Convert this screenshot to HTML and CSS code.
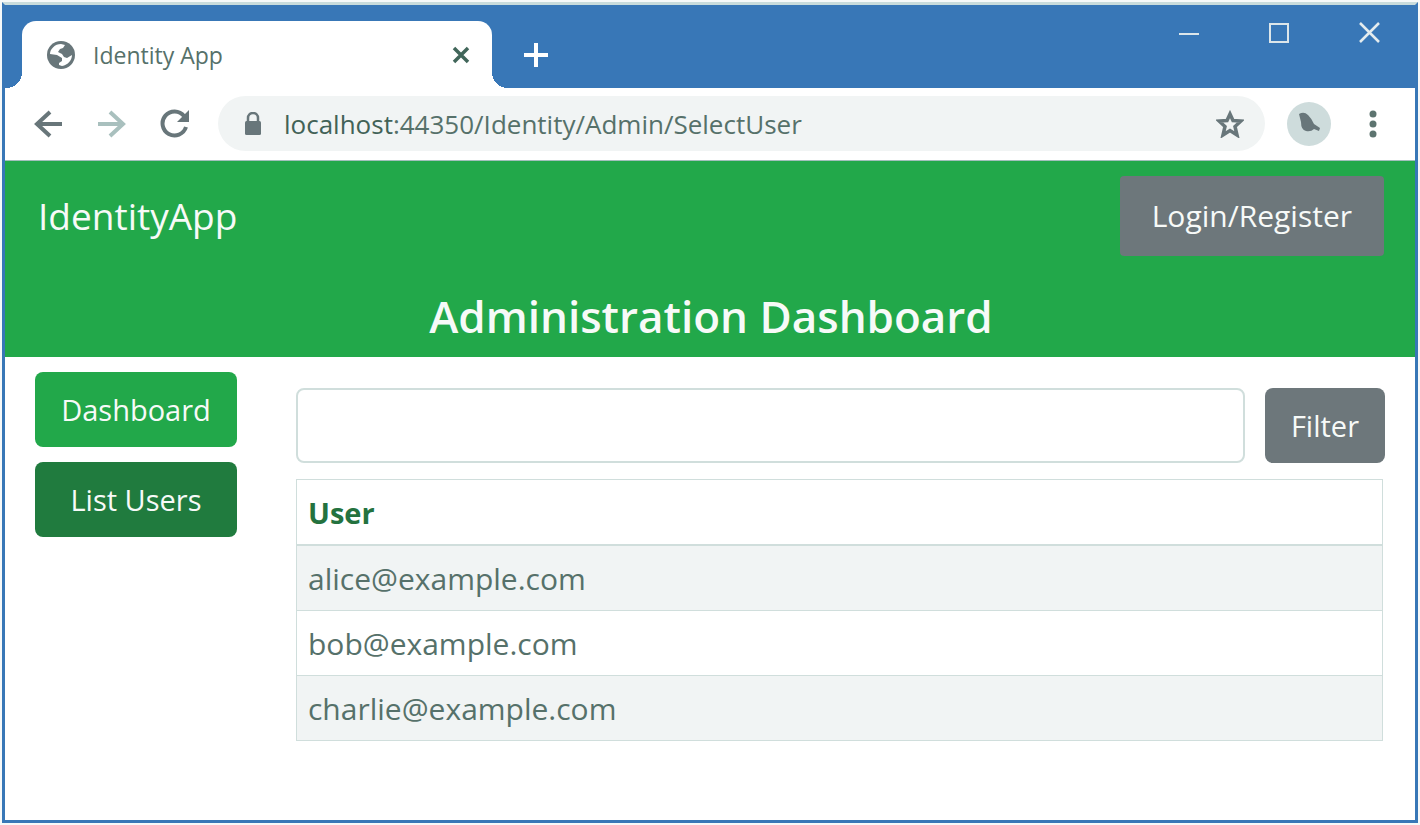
FILE: index.html
```html
<!DOCTYPE html>
<html lang="en">
<head>
<meta charset="utf-8">
<title>Identity App</title>
<link rel="stylesheet" href="styles.css">
</head>
<body>
<div class="window">
  <div class="titlebar">
    <div class="tab">
      <svg class="globe" width="28" height="28" viewBox="0 0 28 28" aria-hidden="true">
        <circle cx="14" cy="14" r="14" fill="#68767a"/>
        <path d="M3 13C3 8 8 3 14 3L18 4 16 7 13 8 11 11 15 13 17 16 20 17 25 14C25 19 21 24 15 25L12 24 12 22 15 20 15 17 10 14Z" fill="#fff"/>
      </svg>
      <span class="tab-title">Identity App</span>
      <button class="icon-button" type="button" aria-label="Close tab">
        <svg width="18" height="18" viewBox="0 0 18 18" fill="none" stroke="#41665a" stroke-width="3.500"><path d="M2 2 16 16M16 2 2 16"/></svg>
      </button>
    </div>
    <button class="icon-button new-tab" type="button" aria-label="New tab">
      <svg width="24" height="24" viewBox="0 0 24 24" fill="none" stroke="#fff" stroke-width="4"><path d="M12 0V24M0 12H24"/></svg>
    </button>
    <div class="window-controls">
      <button class="icon-button" type="button" aria-label="Minimize">
        <svg width="22" height="22" viewBox="0 0 22 22" fill="none" stroke="#dce6ea" stroke-width="2"><path d="M1 13H21"/></svg>
      </button>
      <button class="icon-button" type="button" aria-label="Maximize">
        <svg width="22" height="22" viewBox="0 0 22 22" fill="none" stroke="#dce6ea" stroke-width="2"><path d="M2 3H20V21H2Z"/></svg>
      </button>
      <button class="icon-button" type="button" aria-label="Close">
        <svg width="22" height="22" viewBox="0 0 22 22" fill="none" stroke="#e4ecee" stroke-width="2.500"><path d="M2 2 21 21M21 2 2 21"/></svg>
      </button>
    </div>
  </div>
  <div class="toolbar">
    <div class="history">
      <button class="icon-button" type="button" aria-label="Back">
        <svg width="30" height="28" viewBox="0 0 30 28" fill="none" stroke="#68767a" stroke-width="4"><path d="M28 14H3M16 2 3 14 16 26"/></svg>
      </button>
      <button class="icon-button" type="button" aria-label="Forward">
        <svg width="30" height="28" viewBox="0 0 30 28" fill="none" stroke="#a9c0be" stroke-width="4"><path d="M1 14H26M13 2 26 14 13 26"/></svg>
      </button>
      <button class="icon-button" type="button" aria-label="Reload">
        <svg width="30" height="30" viewBox="0 0 30 30" fill="none" stroke="#68767a" stroke-width="4"><path d="M26 18A12 12 0 1 1 24 7"/><path d="M29 1V13H17Z" fill="#68767a" stroke="none"/></svg>
      </button>
    </div>
    <div class="address">
      <svg width="18" height="24" viewBox="0 0 18 24" aria-hidden="true"><path d="M4 10V6A5 5 0 0 1 14 6V10" fill="none" stroke="#68767a" stroke-width="2.500"/><rect x="1" y="9" width="16" height="14" rx="1.500" fill="#68767a"/></svg>
      <span class="url"><span class="host">localhost</span>:44350/Identity/Admin/SelectUser</span>
      <button class="icon-button" type="button" aria-label="Bookmark">
        <svg width="28" height="28" viewBox="0 0 28 28" fill="none" stroke="#68767a" stroke-width="3.500"><path d="M14 4 17 10.500 25 11 19 16.500 21 25 14 20.500 7 25 9 16.500 3 11 11 10.500Z"/></svg>
      </button>
    </div>
    <button class="icon-button" type="button" aria-label="Profile">
      <svg width="44" height="44" viewBox="0 0 44 44"><circle cx="22" cy="22" r="22" fill="#cedcdc"/><path d="M12 12Q17 9 21 13Q25 17 27 22L33 26L32 29L27 27Q24 30 19 29Q14 28 14 20Z" fill="#68767a"/></svg>
    </button>
    <button class="icon-button" type="button" aria-label="Menu">
      <svg width="8" height="28" viewBox="0 0 8 28" fill="#5d7470"><circle cx="4" cy="4" r="3.500"/><circle cx="4" cy="14" r="3.500"/><circle cx="4" cy="24" r="3.500"/></svg>
    </button>
  </div>
  <header class="header">
    <div class="navbar">
      <a class="brand" href="#">IdentityApp</a>
      <a class="login" href="#">Login/Register</a>
    </div>
    <h1 class="title">Administration Dashboard</h1>
  </header>
  <div class="content">
    <nav class="side">
      <a class="button" href="#">Dashboard</a>
      <a class="button active" href="#">List Users</a>
    </nav>
    <main class="main">
      <form class="filter">
        <input class="filter-input" type="text" aria-label="User filter">
        <button class="button secondary" type="button">Filter</button>
      </form>
      <table class="users">
        <thead><tr><th>User</th></tr></thead>
        <tbody>
          <tr><td>alice@example.com</td></tr>
          <tr><td>bob@example.com</td></tr>
          <tr><td>charlie@example.com</td></tr>
        </tbody>
      </table>
    </main>
  </div>
</div>
</body>
</html>
```
FILE: styles.css
```css
* { box-sizing: border-box; }

body {
  margin: 0;
  padding: 2px;
  background: #f6f9f9;
  font-family: "Open Sans", "Noto Sans", sans-serif;
  font-size: 29px;
  line-height: 44px;
  color: #56716a;
}

.window {
  display: flex;
  flex-direction: column;
  min-height: calc(100vh - 4px);
  border: 3px solid #3877b7;
  border-top-color: #c9dcdc;
  background: #fff;
}

.icon-button {
  display: flex;
  padding: 0;
  border: 0;
  background: none;
}

.titlebar {
  display: flex;
  padding: 16px 35px 0 17px;
  background: #3877b7;
}

.tab {
  position: relative;
  display: flex;
  align-items: center;
  gap: 18px;
  width: 470px;
  height: 67px;
  padding: 0 22px 0 25px;
  border-radius: 14px 14px 0 0;
  background: #fff;
}

.tab::before,
.tab::after {
  content: "";
  position: absolute;
  bottom: 0;
  width: 16px;
  height: 16px;
}

.tab::before {
  right: 100%;
  background: radial-gradient(circle at 0 0, transparent 16px, #fff 16px);
}

.tab::after {
  left: 100%;
  background: radial-gradient(circle at 100% 0, transparent 16px, #fff 16px);
}

.tab-title {
  flex: 1;
  font-size: 23px;
}

.new-tab {
  margin: 22px auto 0 32px;
  align-self: flex-start;
}

.window-controls {
  display: flex;
  gap: 68px;
}

.window-controls .icon-button {
  align-self: flex-start;
}

.toolbar {
  display: flex;
  align-items: center;
  gap: 22px;
  padding: 8px 38px 9px 29px;
  border-bottom: 1px solid #a3bfbc;
}

.history {
  display: flex;
  align-items: center;
  gap: 33px;
  margin-right: 6px;
}

.address {
  display: flex;
  flex: 1;
  align-items: center;
  gap: 22px;
  height: 55px;
  padding: 0 21px 0 26px;
  border-radius: 28px;
  background: #f1f4f4;
}

.toolbar > .icon-button:last-child {
  margin-left: 16px;
}

.url {
  flex: 1;
  font-size: 26px;
}

.host { color: #426257; }

.header {
  padding: 15px 31px 13px 33px;
  background: #22a84a;
  color: #f7faf8;
}

.navbar {
  display: flex;
  align-items: center;
  justify-content: space-between;
}

.brand {
  font-size: 37px;
  color: inherit;
  text-decoration: none;
}

.login {
  padding: 18px 32px;
  border-radius: 4px;
  background: #6d777b;
  color: inherit;
  font-size: 30px;
  text-decoration: none;
}

.title {
  margin: 32px 0 0;
  font-size: 44px;
  font-weight: 600;
  line-height: 56px;
  text-align: center;
}

.content {
  display: flex;
  gap: 59px;
  padding: 15px 30px 16px;
}

.side {
  display: flex;
  flex-direction: column;
  gap: 15px;
  width: 202px;
}

.button {
  padding: 16px 24px 15px;
  border: 0;
  border-radius: 8px;
  background: #22a84a;
  color: #f7faf8;
  font: inherit;
  text-align: center;
  text-decoration: none;
}

.active { background: #207b3e; }

.secondary {
  padding: 16px 26px 15px;
  background: #6d777b;
}

.main {
  flex: 1;
  padding-top: 16px;
}

.filter {
  display: flex;
  gap: 20px;
  margin-bottom: 16px;
}

.filter-input {
  flex: 1;
  min-width: 0;
  padding: 0 20px;
  border: 2px solid #d0dedc;
  border-radius: 8px;
  background: #fff;
  color: inherit;
  font: inherit;
}

.users {
  width: calc(100% - 2px);
  border: 1px solid #d0dedc;
  border-collapse: collapse;
}

.users th,
.users td {
  padding: 11px 11px 9px;
  border: 1px solid #d0dedc;
  text-align: left;
}

.users td { font-size: 30px; }

.users th {
  border-bottom-width: 2px;
  color: #24723f;
}

.users tbody tr:nth-child(odd) { background: #f1f4f4; }
```
